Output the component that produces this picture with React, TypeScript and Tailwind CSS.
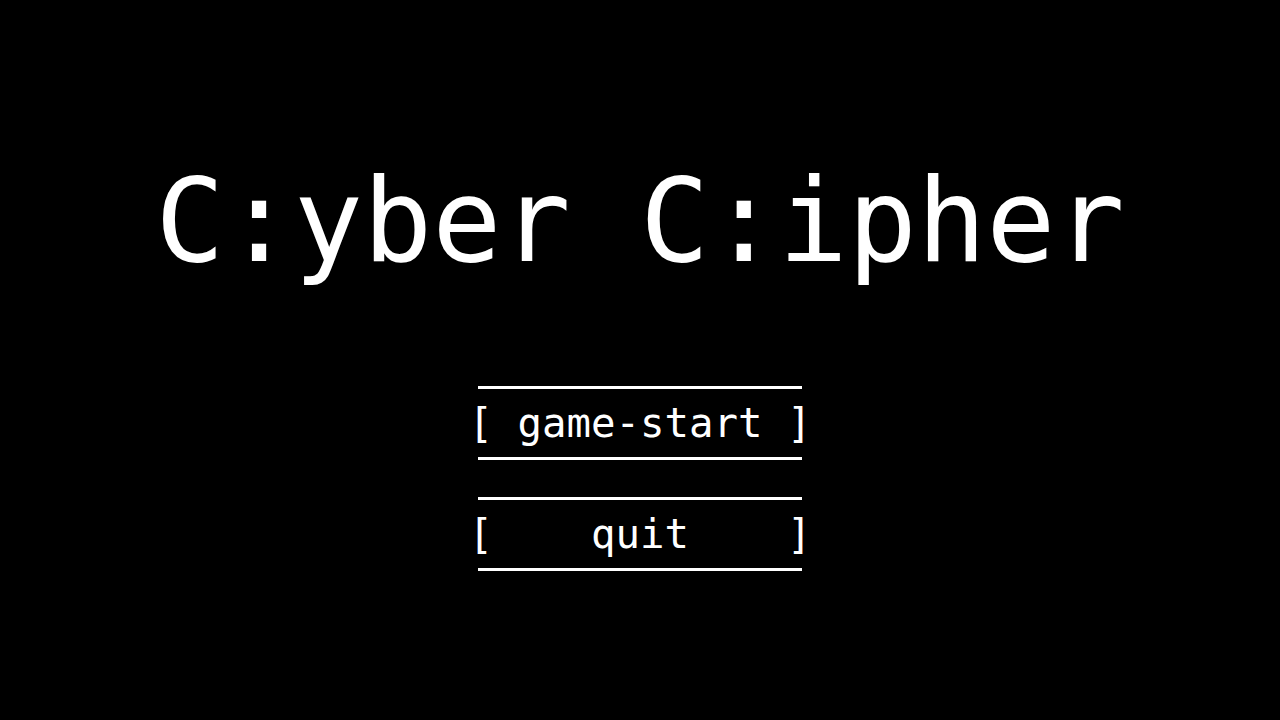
const mono = "font-['DejaVu_Sans_Mono','Liberation_Mono',monospace]";

function MenuButton({ label }: { label: string }) {
  return (
    <button className="flex flex-col items-center text-white">
      <div className="h-[3px] w-[324px] bg-white" />
      <div className="h-[68px] whitespace-pre text-[40.7px] leading-[68px]">{label}</div>
      <div className="h-[3px] w-[324px] bg-white" />
    </button>
  );
}

export default function App() {
  return (
    <div className={`flex h-[720px] w-full flex-col items-center bg-black text-white ${mono}`}>
      <h1 className="mt-[164px] whitespace-pre text-[115px] leading-none">C:yber C:ipher</h1>
      <div className="mt-[107px] flex flex-col items-center gap-[37px]">
        <MenuButton label="[ game-start ]" />
        <MenuButton label="[    quit    ]" />
      </div>
    </div>
  );
}
